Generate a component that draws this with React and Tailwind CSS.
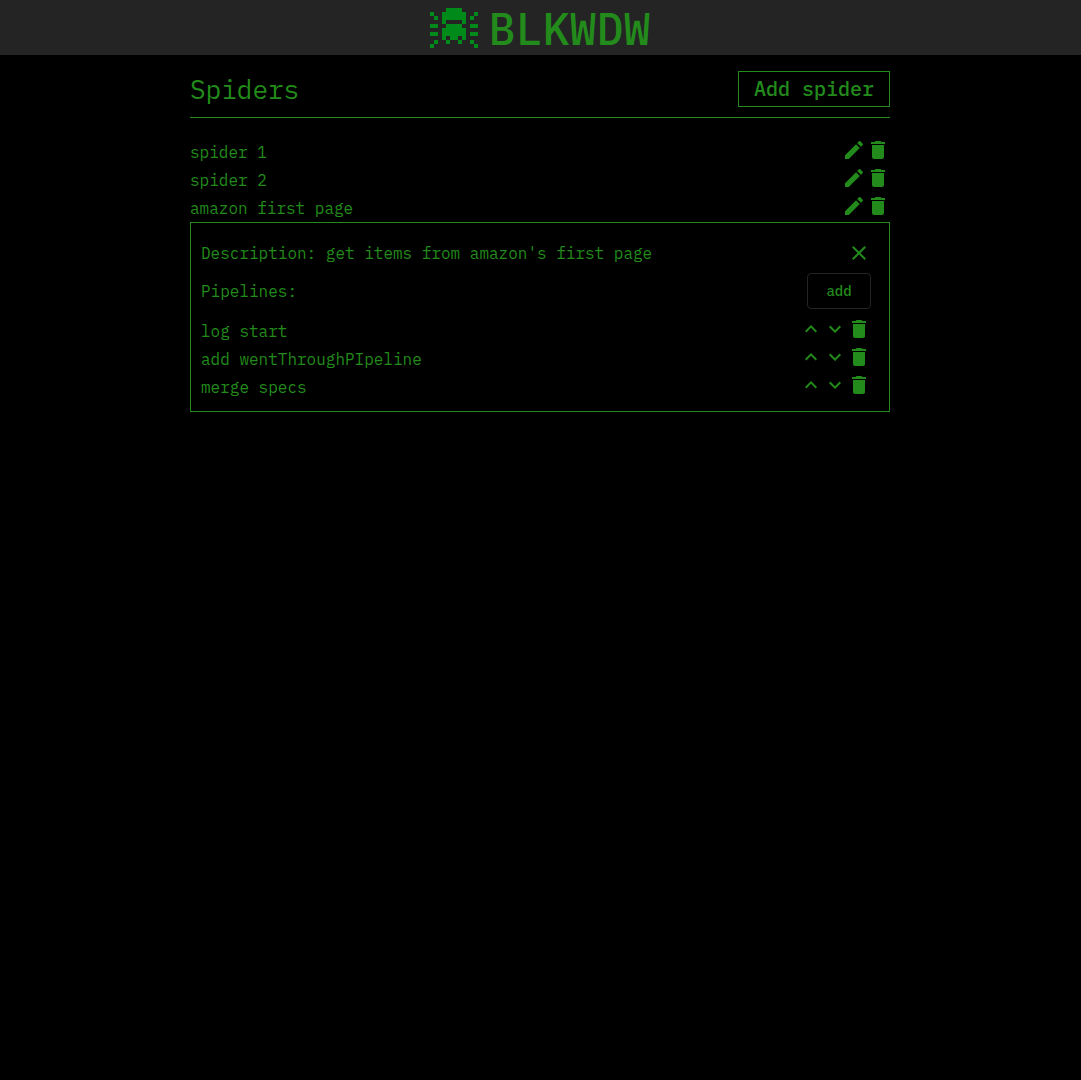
import React from "react";
import { MdEdit, MdDelete, MdClose, MdExpandLess, MdExpandMore } from "react-icons/md";

const LOGO = [
  "....####....",
  "#..######..#",
  ".#.######.#.",
  "...#....#...",
  "##..####..##",
  "...######...",
  "##.######.##",
  "...#.##.#...",
  ".#..#..#..#.",
  "#..........#",
];

const spiders = ["spider 1", "spider 2", "amazon first page"];
const pipelines = ["log start", "add wentThroughPIpeline", "merge specs"];

function SpiderLogo() {
  return (
    <svg viewBox="0 0 12 10" className="h-10 w-12" fill="#008a1a" shapeRendering="crispEdges" aria-hidden="true">
      {LOGO.flatMap((row, y) =>
        [...row].map((c, x) => (c === "#" ? <rect key={`${x}-${y}`} x={x} y={y} width="1" height="1" /> : null))
      )}
    </svg>
  );
}

function IconButton({ icon: Icon, label }) {
  return (
    <button type="button" aria-label={label} className="block size-6 cursor-pointer">
      <Icon className="size-6" />
    </button>
  );
}

export default function App() {
  return (
    <div className="min-h-screen bg-black font-['IBM_Plex_Mono','Liberation_Mono',monospace] text-base text-[#228b1b]">
      <header className="flex h-[55px] items-center justify-center gap-2.5 bg-[#242424]">
        <SpiderLogo />
        <h1 className="text-[45px] leading-[54px] font-medium">BLKWDW</h1>
      </header>
      <main className="mx-auto max-w-[701px] pt-4 pr-px">
        <div className="flex items-center justify-between border-b border-[#228b1b] pb-2.5">
          <h2 className="text-[26px] leading-9">Spiders</h2>
          <button type="button" className="h-9 cursor-pointer border border-[#228b1b] px-[15px] text-xl leading-8 font-medium">
            Add spider
          </button>
        </div>
        <ul className="pt-5">
          {spiders.map((name) => (
            <li key={name} className="flex h-7 items-start justify-between">
              <span className="leading-7">{name}</span>
              <div className="flex">
                <IconButton icon={MdEdit} label={`Edit ${name}`} />
                <IconButton icon={MdDelete} label={`Delete ${name}`} />
              </div>
            </li>
          ))}
        </ul>
        <section className="border border-[#228b1b] pt-[18px] pr-[18px] pb-2.5 pl-2.5">
          <div className="flex items-center justify-between">
            <p className="leading-6">Description: get items from amazon's first page</p>
            <IconButton icon={MdClose} label="Close" />
          </div>
          <div className="flex items-center justify-between py-2">
            <h3 className="leading-6">Pipelines:</h3>
            <button type="button" className="h-9 w-16 cursor-pointer rounded border border-[#242424] text-sm font-medium">
              add
            </button>
          </div>
          <ul>
            {pipelines.map((name) => (
              <li key={name} className="flex h-7 items-start justify-between">
                <span className="leading-7">{name}</span>
                <div className="flex">
                  <IconButton icon={MdExpandLess} label={`Move ${name} up`} />
                  <IconButton icon={MdExpandMore} label={`Move ${name} down`} />
                  <IconButton icon={MdDelete} label={`Delete ${name}`} />
                </div>
              </li>
            ))}
          </ul>
        </section>
      </main>
    </div>
  );
}
